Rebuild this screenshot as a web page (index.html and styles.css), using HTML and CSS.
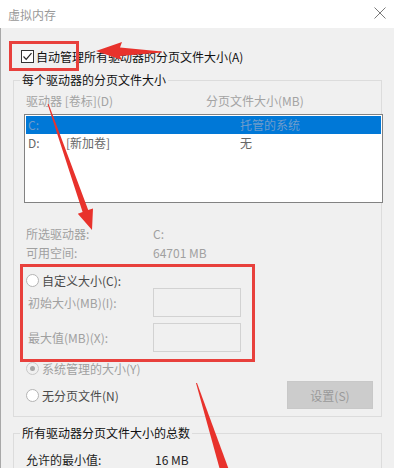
FILE: index.html
```html
<!DOCTYPE html>
<html lang="zh-CN">

<head>
  <meta charset="UTF-8" />
  <meta name="viewport" content="width=device-width, initial-scale=1.0" />
  <title>虚拟内存</title>
  <link rel="stylesheet" href="styles.css">
</head>

<body>
  <div class="titlebar">
    <span>虚拟内存</span>
    <svg class="close" width="12" height="12" viewBox="0 0 12 12">
      <path d="M0.5 0.5 L11.5 11.5 M11.5 0.5 L0.5 11.5" stroke="#7a7a7a" stroke-width="1" fill="none" />
    </svg>
  </div>

  <div class="window">
    <div class="auto-row">
      <span class="checkbox">
        <svg width="11" height="11" viewBox="0 0 11 11">
          <path d="M1.5 5.5 L4.2 8.3 L9.5 2.2" stroke="#222" stroke-width="1.2" fill="none" />
        </svg>
      </span>
      自动管理所有驱动器的分页文件大小(A)
    </div>

    <div class="group group-drives">
      <div class="group-title">每个驱动器的分页文件大小</div>
      <div class="list-head">
        <span>驱动器 [卷标](D)</span>
        <span>分页文件大小(MB)</span>
      </div>
      <div class="drive-list">
        <div class="drive-row selected"><span>C:</span><span></span><span>托管的系统</span></div>
        <div class="drive-row"><span>D:</span><span>[新加卷]</span><span>无</span></div>
      </div>
      <div class="info">
        <span>所选驱动器:</span><span>C:</span>
        <span>可用空间:</span><span>64701 MB</span>
      </div>
      <div class="radio-row custom"><span class="radio"></span>自定义大小(C):</div>
      <div class="size-row"><span class="size-label">初始大小(MB)(I):</span><span class="size-input"></span></div>
      <div class="size-row second"><span class="size-label">最大值(MB)(X):</span><span class="size-input"></span></div>
      <div class="radio-row system"><span class="radio checked"></span>系统管理的大小(Y)</div>
      <div class="radio-row none">
        <span class="radio"></span>无分页文件(N)
        <button class="set-btn">设置(S)</button>
      </div>
    </div>

    <div class="group group-total">
      <div class="group-title">所有驱动器分页文件大小的总数</div>
      <div class="info total">
        <span>允许的最小值:</span><span>16 MB</span>
      </div>
    </div>
  </div>

  <!-- annotations -->
  <div class="mark mark-auto"></div>
  <div class="mark mark-custom"></div>
  <svg class="arrows" width="394" height="468" viewBox="0 0 394 468">
    <polygon points="96,51 122,42 120,47.5 162,51.5 162,52.5 120,56 122,60" fill="#e8322c" />
    <polygon points="47.6,104.3 82.6,212.1 77.8,213.7 92,230 93,208.5 88.2,210.1 48.6,103.9" fill="#e8322c" />
    <polygon points="196,383 197,383 229,470 220,470" fill="#e8322c" />
  </svg>
</body>

</html>
```

FILE: styles.css
```css
body {
  margin: 0;
  width: 394px;
  height: 468px;
  overflow: hidden;
  position: relative;
  font-family: "Noto Sans CJK SC", "Noto Sans", sans-serif;
  font-size: 12px;
  color: #1a1a1a;
  background: #f0f0f0;
}

.titlebar {
  height: 28px;
  background: #fff;
  display: flex;
  justify-content: space-between;
  align-items: center;
  padding: 0 8px 0 8px;
  color: #999;
}

.close {
  margin-top: -2px;
}

.window {
  height: 440px;
  box-sizing: border-box;
  border-left: 1px solid #a8a8a8;
  background: #f0f0f0;
  overflow: hidden;
}

.auto-row {
  margin-top: 20px;
  height: 16px;
  padding-left: 20px;
  display: flex;
  align-items: center;
  color: #111;
}

.checkbox {
  width: 13px;
  height: 13px;
  box-sizing: border-box;
  border: 1px solid #333;
  background: #fff;
  margin-right: 2px;
  display: flex;
  align-items: center;
  justify-content: center;
}

.group {
  margin-left: 12px;
  width: 369px;
  box-sizing: border-box;
  border: 1px solid #dcdcdc;
  padding: 0 0 7px 10px;
}

.group-drives {
  margin-top: 16px;
}

.group-total {
  margin-top: 16px;
  padding-bottom: 20px;
}

.group-title {
  width: fit-content;
  margin: -9px 0 0 -4px;
  padding: 0 2px;
  line-height: 16px;
  background: #f0f0f0;
  color: #111;
}

.list-head {
  margin-top: 5px;
  padding-left: 2px;
  line-height: 16px;
  display: grid;
  grid-template-columns: 180px auto;
  color: #a3a3a3;
}

.drive-list {
  margin-top: 5px;
  width: 359px;
  height: 89px;
  box-sizing: border-box;
  border: 1px solid #828282;
  background: #fff;
  padding: 1px;
}

.drive-row {
  height: 18px;
  line-height: 18px;
  padding-left: 2px;
  display: grid;
  grid-template-columns: 38px 174px 1fr;
  color: #666;
}

.drive-row.selected {
  background: #0078d7;
  color: #6f9ccb;
}

.info {
  margin-top: 21px;
  padding-left: 2px;
  display: grid;
  grid-template-columns: 127px auto;
  line-height: 19px;
  color: #a0a0a0;
}

.info.total {
  margin-top: 10px;
  grid-template-columns: 129px auto;
  line-height: 17px;
  color: #222;
}

.radio-row {
  height: 16px;
  padding-left: 2px;
  display: flex;
  align-items: center;
  color: #4a4a4a;
}

.radio-row.custom {
  margin-top: 10px;
}

.radio-row.system {
  margin-top: 8px;
  color: #a0a0a0;
}

.radio-row.none {
  margin-top: 5px;
  height: 28px;
}

.radio {
  width: 13px;
  height: 13px;
  box-sizing: border-box;
  border: 1px solid #b4b4b4;
  border-radius: 50%;
  background: #fff;
  margin-right: 3px;
  display: flex;
  align-items: center;
  justify-content: center;
}

.radio.checked {
  border-color: #c8c8c8;
  background: #f0f0f0;
}

.radio.checked::after {
  content: "";
  width: 5px;
  height: 5px;
  border-radius: 50%;
  background: #a6a6a6;
}

.size-row {
  height: 29px;
  padding-left: 4px;
  display: flex;
  align-items: center;
  color: #a0a0a0;
}

.size-row.second {
  margin-top: 6px;
}

.size-label {
  width: 125px;
}

.size-input {
  width: 88px;
  height: 29px;
  box-sizing: border-box;
  border: 1px solid #d2d2d2;
  background: #f0f0f0;
}

.set-btn {
  margin: 0 8px 0 auto;
  width: 86px;
  height: 28px;
  border: 1px solid #c8c8c8;
  background: #cccccc;
  color: #9a9a9a;
  font-family: inherit;
  font-size: 12px;
  padding: 0;
}

.mark {
  position: absolute;
  box-sizing: border-box;
  border: 3px solid #e8403c;
}

.mark-auto {
  left: 9px;
  top: 41px;
  width: 70px;
  height: 30px;
}

.mark-custom {
  left: 20px;
  top: 264px;
  width: 235px;
  height: 98px;
}

.arrows {
  position: absolute;
  left: 0;
  top: 0;
  pointer-events: none;
}
```
